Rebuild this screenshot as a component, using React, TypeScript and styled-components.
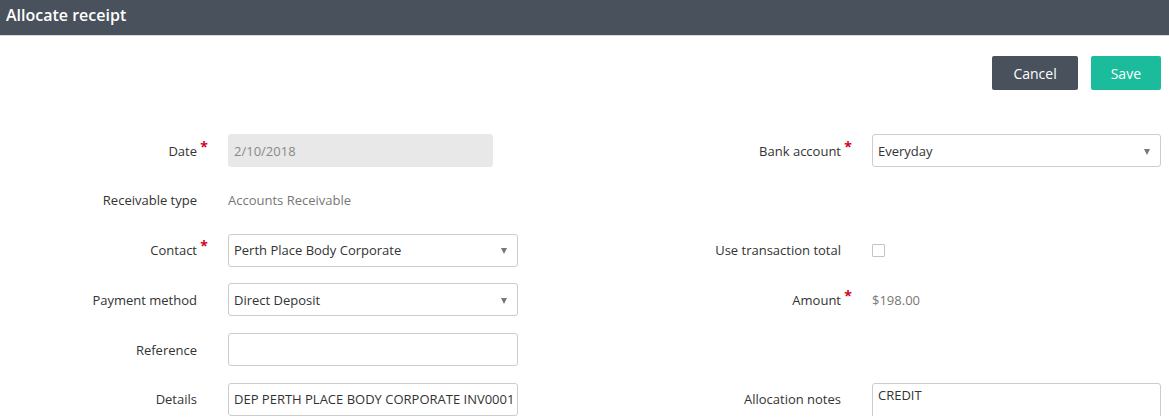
import styled, { createGlobalStyle } from "styled-components";

const GlobalStyle = createGlobalStyle`
    body {
        margin: 0;
        background: #fff;
        font-family: "Open Sans", "Liberation Sans", sans-serif;
        color: #333;
    }
`;

interface Field {
    label?: string;
    required?: boolean;
    kind?: "text" | "disabled" | "select" | "static" | "checkbox" | "textarea";
    value?: string;
    width?: number;
}

// rows: left pair, right pair
const rows: [Field, Field][] = [
    [
        { label: "Date", required: true, kind: "disabled", value: "2/10/2018", width: 265 },
        { label: "Bank account", required: true, kind: "select", value: "Everyday" },
    ],
    [
        { label: "Receivable type", kind: "static", value: "Accounts Receivable" },
        {},
    ],
    [
        { label: "Contact", required: true, kind: "select", value: "Perth Place Body Corporate" },
        { label: "Use transaction total", kind: "checkbox" },
    ],
    [
        { label: "Payment method", kind: "select", value: "Direct Deposit" },
        { label: "Amount", required: true, kind: "static", value: "$198.00" },
    ],
    [
        { label: "Reference", kind: "text", value: "" },
        {},
    ],
    [
        { label: "Details", kind: "text", value: "DEP PERTH PLACE BODY CORPORATE INV0001" },
        { label: "Allocation notes", kind: "textarea", value: "CREDIT" },
    ],
];

function FieldControl({ field }: { field: Field }) {
    switch (field.kind) {
        case "disabled":
            return <DisabledInput $width={field.width}>{field.value}</DisabledInput>;
        case "select":
            return (
                <SelectBox>
                    <span>{field.value}</span>
                    <Caret />
                </SelectBox>
            );
        case "static":
            return <StaticValue>{field.value}</StaticValue>;
        case "checkbox":
            return <CheckBox />;
        case "textarea":
            return <NotesBox>{field.value}</NotesBox>;
        case "text":
            return <TextBox>{field.value}</TextBox>;
        default:
            return <div />;
    }
}

function App() {
    return (
        <>
            <GlobalStyle />
            <Header>Allocate receipt</Header>
            <Toolbar>
                <Button $scheme="dark">Cancel</Button>
                <Button $scheme="primary">Save</Button>
            </Toolbar>
            <FormGrid>
                {rows.map(([left, right], i) => (
                    <Row key={i}>
                        <Label $required={left.required}>{left.label}</Label>
                        <FieldControl field={left} />
                        <Label $required={right.required}>{right.label}</Label>
                        <FieldControl field={right} />
                    </Row>
                ))}
            </FormGrid>
        </>
    );
}

const Header = styled.div`
    height: 35px;
    background: #48515c;
    color: #fff;
    font-size: 16px;
    font-weight: 600;
    line-height: 31px;
    padding: 0 6px;
    box-shadow: 0 1px 0 #d8dadd;
`;

const Toolbar = styled.div`
    display: flex;
    justify-content: flex-end;
    gap: 13px;
    padding: 21px 8px 0 0;
`;

const Button = styled.button<{ $scheme: "dark" | "primary" }>`
    height: 34px;
    padding: 0 ${({ $scheme }) => ($scheme === "dark" ? "21px" : "20px")};
    border: none;
    border-radius: 2px;
    font-family: inherit;
    font-size: 14px;
    color: #fff;
    background: ${({ $scheme }) => ($scheme === "dark" ? "#48515c" : "#1abc9c")};
    cursor: pointer;
`;

const FormGrid = styled.div`
    display: flex;
    flex-direction: column;
    gap: 16.8px;
    padding: 44px 8px 0 0;
`;

const Row = styled.div`
    display: grid;
    grid-template-columns: 197px 290px 292px 289px;
    grid-template-rows: 33px;
    column-gap: 31px;
    align-items: center;
`;

const Label = styled.label<{ $required?: boolean }>`
    position: relative;
    text-align: right;
    font-size: 13px;
    color: #333;

    &::after {
        content: ${({ $required }) => ($required ? '"*"' : "none")};
        position: absolute;
        right: -11px;
        top: -5px;
        color: #d0021b;
        font-size: 14px;
        font-weight: 700;
    }
`;

const inputBase = `
    box-sizing: border-box;
    height: 33px;
    border: 1px solid #ccc;
    border-radius: 3px;
    padding: 0 5px;
    font-size: 13px;
    color: #333;
    display: flex;
    align-items: center;
    white-space: nowrap;
    overflow: hidden;
`;

const DisabledInput = styled.div<{ $width?: number }>`
    ${inputBase}
    width: ${({ $width }) => ($width ? `${$width}px` : "100%")};
    background: #e8e8e8;
    border-color: #e8e8e8;
    color: #888;
`;

const TextBox = styled.div`
    ${inputBase}
    background: #fff;
`;

const SelectBox = styled.div`
    ${inputBase}
    justify-content: space-between;
    background: #fff;
    padding-right: 10px;
`;

const Caret = styled.span`
    width: 0;
    height: 0;
    border-left: 3.5px solid transparent;
    border-right: 3.5px solid transparent;
    border-top: 6px solid #777;
    margin-top: 2px;
`;

const StaticValue = styled.div`
    font-size: 13px;
    color: #777;
`;

const CheckBox = styled.div`
    width: 11px;
    height: 11px;
    border: 1px solid #c4c4c4;
    border-radius: 1px;
    background: #fff;
`;

const NotesBox = styled.div`
    box-sizing: border-box;
    align-self: start;
    height: 60px;
    border: 1px solid #ccc;
    border-radius: 3px;
    padding: 2px 5px;
    font-size: 13px;
    color: #333;
`;

export default App;
